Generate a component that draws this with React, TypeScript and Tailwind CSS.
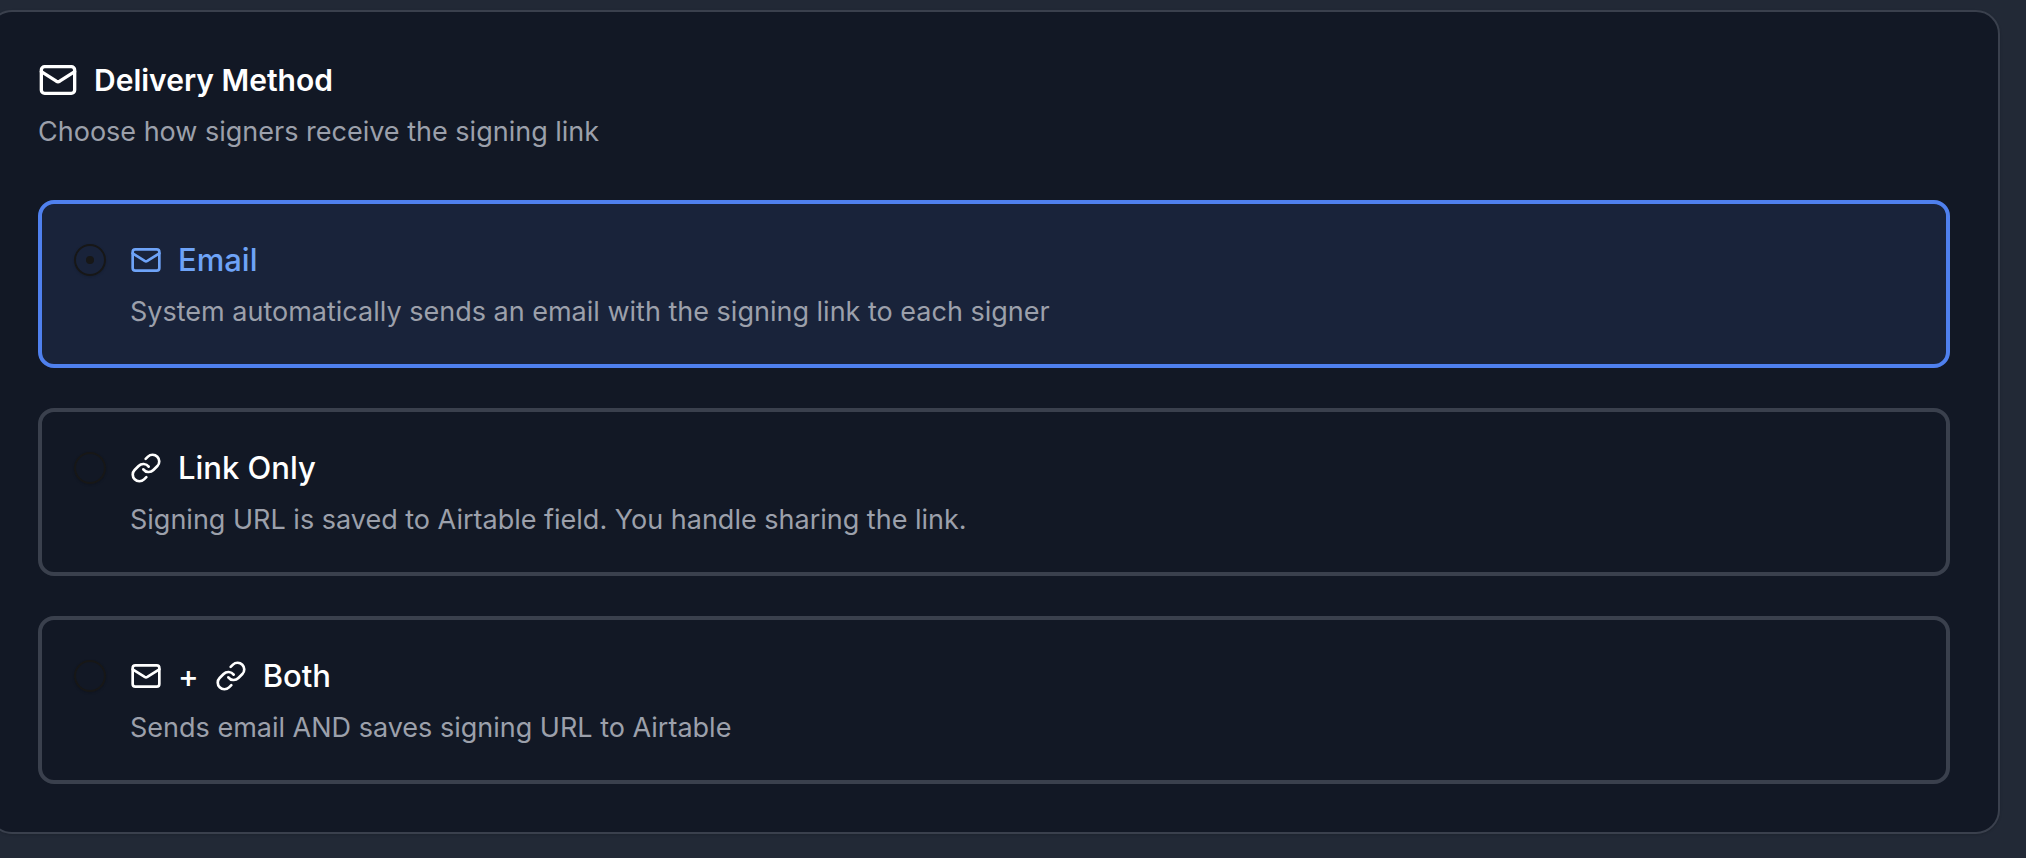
import * as React from "react";
import { Link, Mail } from "lucide-react";

const options = [
  {
    value: "email",
    label: "Email",
    icons: [Mail],
    description:
      "System automatically sends an email with the signing link to each signer",
  },
  {
    value: "link",
    label: "Link Only",
    icons: [Link],
    description:
      "Signing URL is saved to Airtable field. You handle sharing the link.",
  },
  {
    value: "both",
    label: "Both",
    icons: [Mail, Link],
    description: "Sends email AND saves signing URL to Airtable",
  },
];

const App = () => {
  const [method, setMethod] = React.useState("email");

  return (
    <main className="min-h-screen overflow-hidden bg-[#222936] pt-[10px] pr-[26px] pb-6 font-['Inter','Liberation_Sans',sans-serif]">
      <section className="-ml-3 rounded-3xl border-2 border-[#3a404d] bg-[#121825] p-12 shadow-sm">
        <header className="mb-12">
          <h2 className="flex items-center gap-4 text-[30px] leading-10 font-semibold text-white">
            <Mail className="size-10 shrink-0" />
            Delivery Method
          </h2>
          <p className="mt-3 text-[27px] leading-10 text-[#9ca0ab]">
            Choose how signers receive the signing link
          </p>
        </header>

        <div
          role="radiogroup"
          aria-label="Delivery Method"
          className="flex flex-col gap-10"
        >
          {options.map((option) => {
            const selected = method === option.value;
            return (
              <label
                key={option.value}
                className={`flex cursor-pointer items-start gap-6 rounded-2xl border-4 p-8 ${
                  selected
                    ? "border-[#4f80ee] bg-[#19233a]"
                    : "border-[#3a404d]"
                }`}
              >
                <input
                  type="radio"
                  name="delivery-method"
                  value={option.value}
                  checked={selected}
                  onChange={() => setMethod(option.value)}
                  className="mt-2 grid size-8 shrink-0 cursor-pointer appearance-none place-items-center rounded-full border-2 border-[#171717] shadow-sm before:size-2 before:rounded-full checked:before:bg-[#171717]"
                />
                <span className="flex flex-col gap-2">
                  <span
                    className={`flex h-12 items-center gap-4 text-[31px] font-medium ${
                      selected ? "text-[#6ea3f7]" : "text-white"
                    }`}
                  >
                    {option.icons.map((Icon, index) => (
                      <React.Fragment key={index}>
                        {index > 0 && <span>+</span>}
                        <Icon className="size-8 shrink-0" />
                      </React.Fragment>
                    ))}
                    {option.label}
                  </span>
                  <span className="text-[27px] leading-10 text-[#9ca0ab]">
                    {option.description}
                  </span>
                </span>
              </label>
            );
          })}
        </div>
      </section>
    </main>
  );
};

export default App;
